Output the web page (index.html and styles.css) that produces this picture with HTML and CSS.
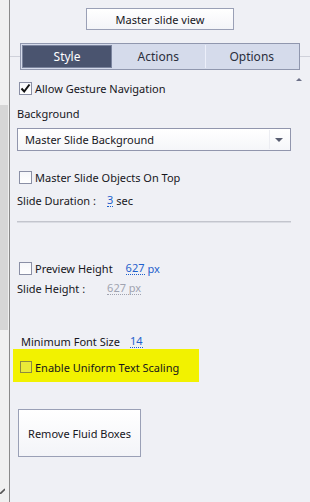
FILE: index.html
```html
<!DOCTYPE html>
<html lang="en">
<head>
    <meta charset="UTF-8">
    <meta name="viewport" content="width=device-width, initial-scale=1.0">
    <title>Slide Properties</title>
    <link rel="stylesheet" href="styles.css">
</head>
<body>
    <div class="side">
        <div class="thumb"></div>
        <svg class="grip" width="5" height="6" viewBox="0 0 5 6"><path d="M0 6 L5 1" stroke="#555" stroke-width="1.6"/></svg>
    </div>
    <div class="panel">
        <div class="top">
            <button class="btn view-btn">Master slide view</button>
        </div>
        <div class="tab-row">
            <span class="tab-line left"></span>
            <div class="tabs">
                <div class="tab active">Style</div>
                <div class="tab">Actions</div>
                <div class="tab">Options</div>
            </div>
            <span class="tab-line"></span>
        </div>

        <div class="row check-row gesture">
            <span class="box checked">
                <svg width="11" height="11" viewBox="0 0 11 11"><path d="M1.5 5.5 L4.2 8.5 L9.5 1.5" fill="none" stroke="#111" stroke-width="2"/></svg>
            </span>
            <span>Allow Gesture Navigation</span>
            <span class="up-arrow"></span>
        </div>

        <div class="row label bg-label">Background</div>
        <div class="select">
            <span>Master Slide Background</span>
            <span class="select-sep"></span>
            <span class="select-arrow"></span>
        </div>

        <div class="row check-row objects">
            <span class="box"></span>
            <span>Master Slide Objects On Top</span>
        </div>

        <div class="row label duration">
            <span>Slide Duration :</span>
            <span class="value dur-val">3</span>
            <span>sec</span>
        </div>

        <div class="divider"></div>

        <div class="row check-row preview">
            <span class="box"></span>
            <span>Preview Height</span>
            <span class="value preview-val">627</span>
            <span class="unit">px</span>
        </div>

        <div class="row label slide-height">
            <span>Slide Height :</span>
            <span class="value muted">627 px</span>
        </div>

        <div class="row label min-font">
            <span>Minimum Font Size</span>
            <span class="value font-val">14</span>
        </div>

        <div class="marker">
            <div class="row check-row uniform">
                <span class="box"></span>
                <span>Enable Uniform Text Scaling</span>
            </div>
        </div>

        <button class="btn fluid-btn">Remove Fluid Boxes</button>
    </div>
</body>
</html>
```

FILE: styles.css
```css
* {
    margin: 0;
    padding: 0;
    box-sizing: border-box;
    font-family: "Noto Sans", sans-serif;
}

body {
    width: 310px;
    height: 502px;
    display: flex;
    background-color: #eff0f5;
    color: #16161c;
    font-size: 11px;
    overflow: hidden;
}

.side {
    width: 10px;
    background-color: #f0f0f0;
    border-right: 1px solid #8a8a8a;
    display: flex;
    flex-direction: column;
}

.thumb {
    width: 8px;
    height: 225px;
    margin-top: 105px;
    background-color: #d6d6d6;
}

.grip {
    margin-top: auto;
    margin-bottom: 8px;
}

.panel {
    flex: 1;
    display: flex;
    flex-direction: column;
}

.btn {
    background: linear-gradient(#ffffff, #f3f4f8);
    border: 1px solid #9aa0b6;
    color: #16161c;
    font-size: 11px;
    cursor: pointer;
}

.top {
    display: flex;
    justify-content: center;
    margin-top: 8px;
}

.view-btn {
    width: 148px;
    height: 22px;
}

.tab-row {
    display: flex;
    align-items: center;
    margin-top: 13px;
}

.tab-line {
    flex: 1;
    height: 1px;
    background-color: #cfd1da;
}

.tabs {
    width: 280px;
    height: 27px;
    display: flex;
    padding: 1px;
    border: 1px solid #9097ae;
    background-color: #d5dbeb;
    font-size: 12px;
}

.tab {
    flex: 1;
    display: flex;
    align-items: center;
    justify-content: center;
    color: #2a2e3c;
    border-left: 1px solid #eceffa;
}

.tab.active {
    flex: 0 0 90px;
    background-color: #4a546f;
    color: #ffffff;
    border: 1px solid #7b849e;
}

.tab.active + .tab {
    border-left: none;
}

.row {
    display: flex;
    align-items: center;
    height: 14px;
    white-space: nowrap;
}

.check-row {
    padding-left: 9px;
}

.box {
    width: 13px;
    height: 13px;
    margin-right: 3px;
    border: 1px solid #8a8fa5;
    background: linear-gradient(#f6f7fa, #ffffff);
    display: flex;
    align-items: center;
    justify-content: center;
}

.label {
    padding-left: 7px;
}

.gesture {
    margin-top: 11px;
}

.up-arrow {
    margin-left: auto;
    margin-right: 8px;
    align-self: flex-start;
    margin-top: -3px;
    border-left: 3px solid transparent;
    border-right: 3px solid transparent;
    border-bottom: 3px solid #6c7088;
}

.bg-label {
    margin-top: 11px;
}

.select {
    width: 274px;
    height: 23px;
    margin: 8px 0 0 7px;
    padding-left: 7px;
    display: flex;
    align-items: center;
    border: 1px solid #9196ad;
    background: linear-gradient(#ffffff, #f5f6f9);
}

.select-sep {
    margin-left: auto;
    width: 1px;
    height: 19px;
    background-color: #ecedf2;
}

.select-arrow {
    margin: 0 7px 0 5px;
    border-top: 4px solid #585d70;
    border-right: 4px solid transparent;
    border-left: 4px solid transparent;
}

.objects {
    margin-top: 19px;
}

.duration {
    margin-top: 9px;
}

.value {
    color: #1e5fcc;
    border-bottom: 1px dotted #1e5fcc;
    line-height: 13px;
    margin-right: 3px;
}

.dur-val {
    margin-left: 11px;
}

.muted {
    color: #a0a3b0;
    border-bottom-color: #a0a3b0;
    margin-left: 22px;
}

.divider {
    width: 274px;
    margin: 14px 0 0 7px;
    border-top: 1px solid #c3c5cd;
    border-bottom: 1px solid #dadce3;
}

.preview {
    margin-top: 38px;
}

.preview-val {
    margin-left: 13px;
}

.unit {
    color: #1e5fcc;
}

.slide-height {
    margin-top: 6px;
}

.min-font {
    margin-top: 39px;
    padding-left: 11px;
}

.font-val {
    margin-left: 10px;
}

.marker {
    width: 186px;
    height: 33px;
    margin: 1px 0 0 3px;
    padding-top: 11px;
    background-color: #f2f200;
}

.uniform {
    padding-left: 7px;
}

.marker .box {
    width: 12px;
    height: 12px;
    border-color: #8c8a40;
    background: #eaea38;
}

.fluid-btn {
    width: 123px;
    height: 48px;
    margin: 27px 0 0 8px;
}
```
